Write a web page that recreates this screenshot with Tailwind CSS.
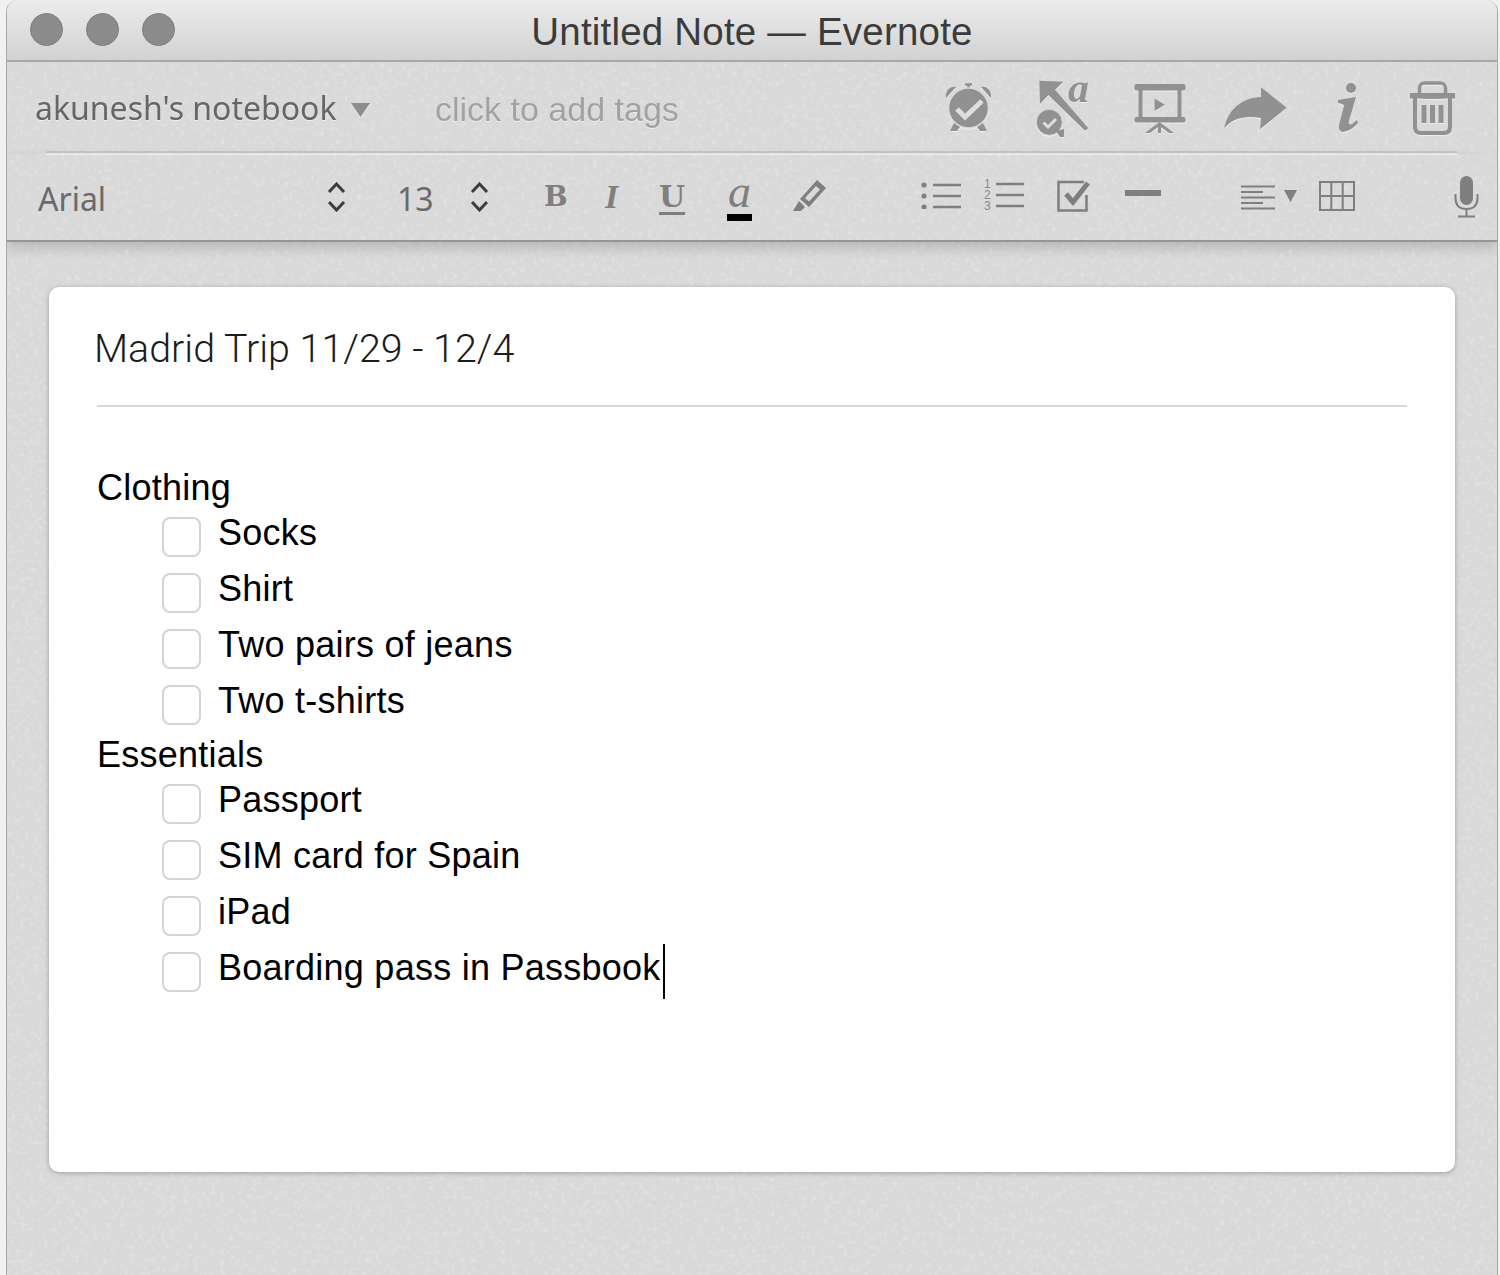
<!DOCTYPE html>
<html lang="en">
  <head>
    <meta charset="UTF-8" />
    <title>Untitled Note — Evernote</title>
    <script src="https://cdn.jsdelivr.net/npm/@tailwindcss/browser@4"></script>
  </head>
  <body class="bg-[#f1f1f1] h-[1275px] w-[1500px] overflow-hidden font-['Liberation_Sans',sans-serif]">
    <div class="relative ml-[6px] w-[1492px] h-[1275px] bg-[#d9d9d9] border-x border-[#a9a9a9] rounded-t-[12px] overflow-hidden">
      <!-- paper grain -->
      <svg class="absolute inset-0 w-full h-full" aria-hidden="true">
        <filter id="grain">
          <feTurbulence type="fractalNoise" baseFrequency="0.22" numOctaves="3" seed="7" />
          <feColorMatrix values="0 0 0 0 1  0 0 0 0 1  0 0 0 0 1  2 0 0 0 -1" />
        </filter>
        <rect width="100%" height="100%" filter="url(#grain)" opacity="0.32" />
      </svg>

      <!-- title bar -->
      <header class="relative h-[62px] flex items-center bg-gradient-to-b from-[#ececec] to-[#d2d2d2] border-b-2 border-[#a8a8a8]">
        <div class="flex gap-[23px] ml-[23px] -mt-[2px]">
          <span class="w-[33px] h-[33px] rounded-full bg-[#8b8b8b] border border-[#7b7b7b]"></span>
          <span class="w-[33px] h-[33px] rounded-full bg-[#8b8b8b] border border-[#7b7b7b]"></span>
          <span class="w-[33px] h-[33px] rounded-full bg-[#8b8b8b] border border-[#7b7b7b]"></span>
        </div>
        <h1 class="absolute inset-x-0 top-[9px] text-center text-[38.5px] leading-[46px] tracking-[0.2px] text-[#3b3b3b]">Untitled Note — Evernote</h1>
      </header>

      <!-- notebook row -->
      <div class="relative h-[92px] flex items-center text-[#6f6f6f] drop-shadow-[0_1px_0_rgba(255,255,255,0.55)]">
        <span class="ml-[28px] text-[32px] leading-none font-['Noto_Sans',sans-serif] -mt-[1px] text-[#666] w-[316px] whitespace-nowrap">akunesh's notebook</span>
        <svg class="w-[19px] h-[14px] mt-[3px]" viewBox="0 0 19 14"><path d="M0 0h19L9.500 14z" fill="#8d8d8d" /></svg>
        <span class="ml-[65px] mt-[2px] text-[34px] leading-none text-[#a2a2a2] whitespace-nowrap">click to add tags</span>

        <div class="ml-auto mr-[42px] flex items-center text-[#919191]">
          <!-- reminder -->
          <svg class="w-[48px] h-[50px]" viewBox="0 0 48 50">
            <path d="M1 15C0 8 5 3 11 4zM46 15C47 8 42 3 36 4z" fill="currentColor" />
            <path d="M20 1.500h7M23.500 2v5" stroke="currentColor" stroke-width="2.500" />
            <path d="M10 38L5 48h7l5-7zM37 38l5 10h-7l-5-7z" fill="currentColor" />
            <circle cx="23.500" cy="25" r="20" fill="currentColor" stroke="#d9d9d9" stroke-width="1.500" />
            <path d="M12 26l8 8 17-16" stroke="#dedede" stroke-width="5" fill="none" />
          </svg>
          <!-- tag / annotate -->
          <svg class="ml-[43px] w-[54px] h-[58px] overflow-visible" viewBox="0 0 54 58">
            <path d="M3.300 1.700L27.300 2.700 19 10.700 52.300 49.300 49 51.700 12.300 16 4 25z" fill="currentColor" />
            <text x="32" y="23" font-family="Liberation Serif" font-style="italic" font-weight="700" font-size="42" fill="currentColor">a</text>
            <circle cx="13.300" cy="43.300" r="13" fill="currentColor" stroke="#d9d9d9" stroke-width="1" />
            <path d="M20 52l4 6h4v-8z" fill="currentColor" />
            <path d="M7.500 43.500l4.500 4.500 8-8" stroke="#dedede" stroke-width="3" fill="none" />
          </svg>
          <!-- presentation -->
          <svg class="ml-[44px] w-[52px] h-[52px]" viewBox="0 0 52 52">
            <rect x="0.500" y="2" width="51" height="6.500" rx="2" fill="currentColor" />
            <rect x="0.500" y="35" width="51" height="5.500" rx="2" fill="currentColor" />
            <path d="M6.500 8v28M45.500 8v28" stroke="currentColor" stroke-width="4" />
            <path d="M20.500 16.500L31 22.700 20.500 29z" fill="currentColor" />
            <path d="M25.500 40L11 51h5l8-6v6h3v-6l8 6h5z" fill="currentColor" />
          </svg>
          <!-- share -->
          <svg class="ml-[38px] w-[64px] h-[43px]" viewBox="0 0 64 43">
            <path d="M0.300 41.300C4 22 18 11 37 10L37 0.300 62.700 20.700 36 42.300 37 31C22 28 8 31 0.300 41.300z" fill="currentColor" />
          </svg>
          <!-- info -->
          <svg class="ml-[47px] w-[25px] h-[50px]" viewBox="0 0 25 50">
            <circle cx="16" cy="5" r="5" fill="currentColor" />
            <path d="M3 17L21 14 14 38Q13 43 17 41L22 37 23 40Q16 48 8 49 3 48 4 42L9 23Q9 21 3 20z" fill="currentColor" />
          </svg>
          <!-- trash -->
          <svg class="ml-[50px] w-[45px] h-[55px]" viewBox="0 0 45 55">
            <rect x="9.500" y="2" width="26" height="14" rx="5" fill="none" stroke="currentColor" stroke-width="3.500" />
            <rect x="0" y="12" width="45" height="5.500" fill="currentColor" />
            <path d="M5 17v29q0 6 6 6h23q6 0 6-6V17" fill="none" stroke="currentColor" stroke-width="4" />
            <path d="M11.500 24h5v18h-5zM20 24h5v18h-5zM28.500 24h5v18h-5z" fill="currentColor" />
          </svg>
        </div>
        <div class="absolute left-[39px] right-[40px] bottom-0 h-[3px] bg-[#c6c6c6] border-b border-[#e6e6e6]"></div>
      </div>

      <!-- format row -->
      <div class="relative h-[88px] flex items-center border-b-2 border-[#969696] shadow-[0_6px_12px_rgba(0,0,0,0.16)] text-[#7f7f7f]">
        <span class="ml-[31px] w-[289px] mt-[4px] text-[32px] leading-none text-[#6a6a6a] font-['Noto_Sans',sans-serif]">Arial</span>
        <svg class="w-[19px] h-[30px] text-[#3d3d3d]" viewBox="0 0 19 30"><path d="M2 10l7.500-8L17 10M2 20l7.500 8L17 20" fill="none" stroke="currentColor" stroke-width="3" /></svg>
        <span class="ml-[51px] w-[73px] mt-[4px] text-[32px] leading-none text-[#6a6a6a] font-['Noto_Sans',sans-serif]">13</span>
        <svg class="w-[19px] h-[30px] text-[#3d3d3d]" viewBox="0 0 19 30"><path d="M2 10l7.500-8L17 10M2 20l7.500 8L17 20" fill="none" stroke="currentColor" stroke-width="3" /></svg>

        <span class="ml-[55px] w-[61px] text-[28px] leading-none font-bold font-['DejaVu_Serif',serif]">B</span>
        <span class="w-[54px] text-[34px] leading-none font-bold italic font-['Liberation_Serif',serif]">I</span>
        <span class="w-[69px] text-[30px] leading-none font-bold font-['DejaVu_Serif',serif] underline underline-offset-[5px] decoration-[3px]">U</span>
        <span class="relative w-[65px] text-[46px] leading-none italic font-['Liberation_Serif',serif] -mt-[10px]">a
          <span class="absolute left-[-1px] top-[45px] w-[25px] h-[7px] bg-black"></span>
        </span>
        <!-- highlighter -->
        <svg class="w-[34px] h-[33px] -mt-[3px]" viewBox="0 0 34 33">
          <path d="M24 1l9 8-17 19-9-8z" fill="currentColor" />
          <path d="M23 7l4 3.500-11 12-4-3.500z" fill="#d9d9d9" />
          <path d="M6 22l6 6-4 4H0z" fill="currentColor" />
        </svg>

        <!-- bullets -->
        <svg class="ml-[94px] w-[40px] h-[27px] -mt-[3px]" viewBox="0 0 40 27">
          <circle cx="3" cy="3" r="2.600" fill="currentColor" /><circle cx="3" cy="14" r="2.600" fill="currentColor" /><circle cx="3" cy="25" r="2.600" fill="currentColor" />
          <path d="M12 3h28M12 14h28M12 25h28" stroke="currentColor" stroke-width="2.500" />
        </svg>
        <!-- numbered -->
        <div class="ml-[23px] w-[40px] h-[33px] -mt-[3px] flex">
          <div class="flex flex-col w-[12px] text-[12px] leading-[11px] text-[#888]"><span>1</span><span>2</span><span>3</span></div>
          <svg class="w-[28px] h-[33px]" viewBox="0 0 28 33"><path d="M0 5h28M0 16h28M0 27h28" stroke="currentColor" stroke-width="2.500" /></svg>
        </div>
        <!-- checkbox -->
        <svg class="ml-[33px] w-[36px] h-[32px] -mt-[3px]" viewBox="0 0 36 32">
          <path d="M27 2H1.500v28.500h28V15" fill="none" stroke="currentColor" stroke-width="2.500" />
          <path d="M9 14l7 8L31 3" fill="none" stroke="currentColor" stroke-width="5" />
        </svg>
        <div class="ml-[32px] w-[36px] h-[6px] bg-[#7f7f7f] -mt-[8px]"></div>
        <!-- align -->
        <svg class="ml-[80px] w-[34px] h-[25px]" viewBox="0 0 34 25">
          <path d="M0 1.500h34M0 7h22M0 12.500h34M0 18h22M0 23.500h34" stroke="currentColor" stroke-width="2" />
        </svg>
        <svg class="ml-[9px] w-[13px] h-[12px] -mt-[2px]" viewBox="0 0 13 12"><path d="M0 0h13L6.500 12z" fill="currentColor" /></svg>
        <!-- table -->
        <svg class="ml-[22px] w-[36px] h-[30px] -mt-[3px]" viewBox="0 0 36 30">
          <path d="M1 1h34v28H1zM12.300 1v28M23.700 1v28M1 15h34" fill="none" stroke="currentColor" stroke-width="2" />
        </svg>
        <!-- mic -->
        <svg class="ml-[99px] w-[25px] h-[42px]" viewBox="0 0 25 42">
          <rect x="6" y="0" width="13" height="29" rx="6.500" fill="currentColor" />
          <path d="M1.500 18v4q0 11 11 11t11-11v-4M12.500 33v7M4 40.500h17" fill="none" stroke="currentColor" stroke-width="2" />
        </svg>
      </div>

      <!-- note card -->
      <main class="relative mt-[45px] ml-[42px] w-[1406px] h-[885px] bg-white rounded-[10px] shadow-[0_1px_5px_rgba(0,0,0,0.28)] px-[48px] text-black">
        <h2 class="h-[118px] pt-[37px] -ml-[3px] text-[39.4px] leading-[50px] font-light font-['Roboto',sans-serif] text-[#1c1c1c]">Madrid Trip 11/29 - 12/4</h2>
        <hr class="w-[1310px] border-t-2 border-[#d6d6d6]" />
        <div class="mt-[58px] text-[36px] leading-[46px] tracking-[0.25px]">
          <p class="h-[44px]">Clothing</p>
          <ul class="flex flex-col">
            <li class="h-[56px] flex items-center"><span class="ml-[65px] w-[39px] h-[40px] rounded-[8px] border-2 border-[#d4d4d4]"></span><span class="ml-[17px] -mt-[8px]">Socks</span></li>
            <li class="h-[56px] flex items-center"><span class="ml-[65px] w-[39px] h-[40px] rounded-[8px] border-2 border-[#d4d4d4]"></span><span class="ml-[17px] -mt-[8px]">Shirt</span></li>
            <li class="h-[56px] flex items-center"><span class="ml-[65px] w-[39px] h-[40px] rounded-[8px] border-2 border-[#d4d4d4]"></span><span class="ml-[17px] -mt-[8px]">Two pairs of jeans</span></li>
            <li class="h-[56px] flex items-center"><span class="ml-[65px] w-[39px] h-[40px] rounded-[8px] border-2 border-[#d4d4d4]"></span><span class="ml-[17px] -mt-[8px]">Two t-shirts</span></li>
          </ul>
          <p class="-mt-[1px] h-[44px]">Essentials</p>
          <ul class="flex flex-col">
            <li class="h-[56px] flex items-center"><span class="ml-[65px] w-[39px] h-[40px] rounded-[8px] border-2 border-[#d4d4d4]"></span><span class="ml-[17px] -mt-[8px]">Passport</span></li>
            <li class="h-[56px] flex items-center"><span class="ml-[65px] w-[39px] h-[40px] rounded-[8px] border-2 border-[#d4d4d4]"></span><span class="ml-[17px] -mt-[8px]">SIM card for Spain</span></li>
            <li class="h-[56px] flex items-center"><span class="ml-[65px] w-[39px] h-[40px] rounded-[8px] border-2 border-[#d4d4d4]"></span><span class="ml-[17px] -mt-[8px]">iPad</span></li>
            <li class="h-[56px] flex items-center"><span class="ml-[65px] w-[39px] h-[40px] rounded-[8px] border-2 border-[#d4d4d4]"></span><span class="ml-[17px] -mt-[8px]">Boarding pass in Passbook</span><span class="w-[2px] h-[55px] bg-black ml-[2px] -mt-[1px]"></span></li>
          </ul>
        </div>
      </main>
    </div>
  </body>
</html>
